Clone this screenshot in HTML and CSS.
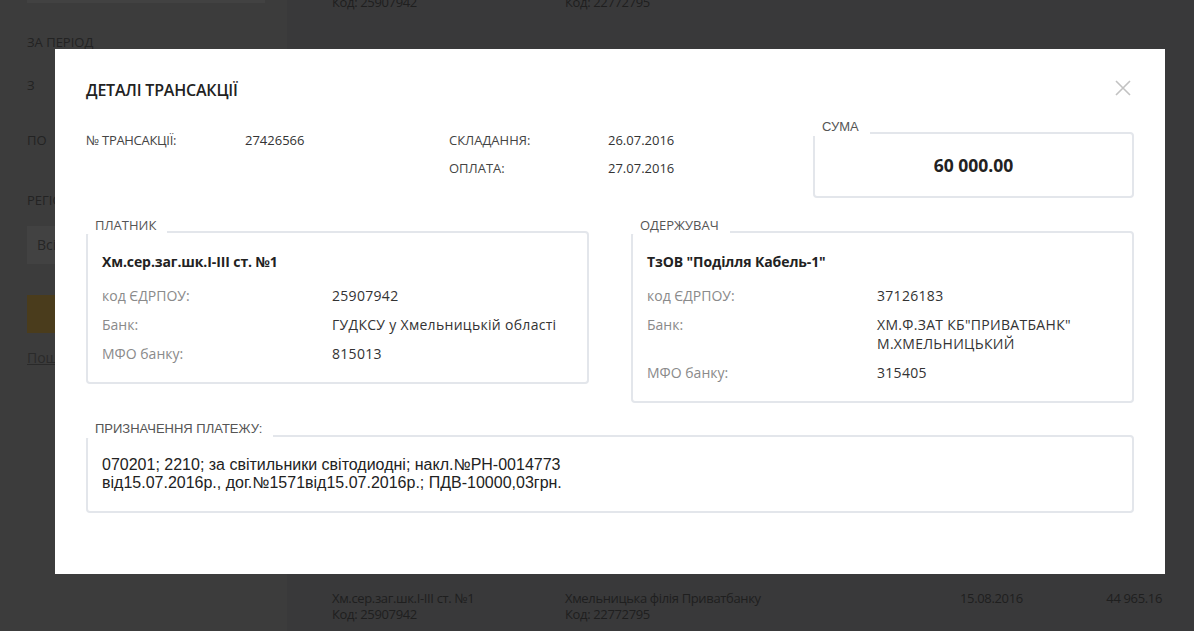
FILE: index.html
```html
<!DOCTYPE html>
<html lang="uk">
<head>
    <meta charset="UTF-8">
    <meta name="viewport" content="width=device-width, initial-scale=1.0">
    <title>Деталі трансакції</title>
    <link rel="stylesheet" href="styles.css">
</head>
<body>
    <div class="page">
        <aside class="sidebar">
            <div class="sb-input"></div>
            <div class="sb-label sb-period">ЗА ПЕРІОД</div>
            <div class="sb-label sb-from">З</div>
            <div class="sb-label sb-to">ПО</div>
            <div class="sb-label sb-region">РЕГІОН</div>
            <div class="sb-select">Всі</div>
            <div class="sb-button"></div>
            <a class="sb-link" href="#">Пошук</a>
        </aside>

        <main class="main">
            <div class="rows">
                <div class="row">
                    <div>Хм.сер.заг.шк.І-ІІІ ст. №1<br>Код: 25907942</div>
                    <div>Хмельницька філія Приватбанку<br>Код: 22772795</div>
                    <div>18.08.2016</div>
                    <div class="amount">12 430.00</div>
                </div>
                <div class="row">
                    <div>Хм.сер.заг.шк.І-ІІІ ст. №1<br>Код: 25907942</div>
                    <div>Хмельницька філія Приватбанку<br>Код: 22772795</div>
                    <div>15.08.2016</div>
                    <div class="amount">44 965.16</div>
                </div>
            </div>
        </main>
    </div>

    <!-- modal -->
    <div class="overlay">
        <div class="modal">
            <svg class="close" width="16" height="16" viewBox="0 0 16 16">
                <path d="M1 1 L15 15 M15 1 L1 15" stroke="#c2c2c2" stroke-width="1.6" fill="none"/>
            </svg>

            <h2 class="modal-title">ДЕТАЛІ ТРАНСАКЦІЇ</h2>

            <div class="summary">
                <div class="info">
                    <span class="info-label narrow">№ ТРАНСАКЦІЇ:</span>
                    <span class="info-value">27426566</span>
                    <span class="info-label">СКЛАДАННЯ:</span>
                    <span class="info-value">26.07.2016</span>
                    <span></span>
                    <span></span>
                    <span class="info-label">ОПЛАТА:</span>
                    <span class="info-value">27.07.2016</span>
                </div>
                <div class="box sum-box">
                    <span class="box-label arial">СУМА</span>
                    <div class="sum-value">60 000.00</div>
                </div>
            </div>

            <div class="parties">
                <div class="box party">
                    <span class="box-label">ПЛАТНИК</span>
                    <div class="party-name">Хм.сер.заг.шк.І-ІІІ ст. №1</div>
                    <div class="party-rows">
                        <span class="p-label">код ЄДРПОУ:</span>
                        <span class="p-value">25907942</span>
                        <span class="p-label">Банк:</span>
                        <span class="p-value">ГУДКСУ у Хмельницькій області</span>
                        <span class="p-label">МФО банку:</span>
                        <span class="p-value">815013</span>
                    </div>
                </div>
                <div class="box party">
                    <span class="box-label">ОДЕРЖУВАЧ</span>
                    <div class="party-name">ТзОВ "Поділля Кабель-1"</div>
                    <div class="party-rows">
                        <span class="p-label">код ЄДРПОУ:</span>
                        <span class="p-value">37126183</span>
                        <span class="p-label">Банк:</span>
                        <span class="p-value">ХМ.Ф.ЗАТ КБ"ПРИВАТБАНК"<br>М.ХМЕЛЬНИЦЬКИЙ</span>
                        <span class="p-label">МФО банку:</span>
                        <span class="p-value">315405</span>
                    </div>
                </div>
            </div>

            <div class="box purpose">
                <span class="box-label arial">ПРИЗНАЧЕННЯ ПЛАТЕЖУ:</span>
                <div class="purpose-text">070201; 2210; за світильники світодиодні; накл.№РН-0014773<br>від15.07.2016р., дог.№1571від15.07.2016р.; ПДВ-10000,03грн.</div>
            </div>
        </div>
    </div>
</body>
</html>
```

FILE: styles.css
```css
html, body {
    margin: 0;
    height: 100%;
    overflow: hidden;
}
body {
    font-family: 'Open Sans', 'Noto Sans', sans-serif;
    font-size: 13px;
    color: #333;
}
.page {
    display: flex;
    height: 631px;
}

/* background page (dimmed by overlay) */
.sidebar {
    width: 287px;
    flex-shrink: 0;
    background: #787878;
    padding: 0 22px 0 27px;
    box-sizing: border-box;
    display: flex;
    flex-direction: column;
}
.sb-input {
    height: 3px;
    background: #848484;
}
.sb-label {
    line-height: 20px;
    color: #464646;
    font-size: 13px;
}
.sb-period { margin-top: 29px; }
.sb-from { margin-top: 23px; }
.sb-to { margin-top: 35px; }
.sb-region { margin-top: 40px; }
.sb-select {
    margin-top: 16px;
    height: 38px;
    line-height: 38px;
    padding-left: 10px;
    background: #858585;
    color: #4c4c4c;
    font-size: 14px;
}
.sb-button {
    margin-top: 31px;
    height: 38px;
    background: #947838;
}
.sb-link {
    margin-top: 15px;
    line-height: 20px;
    color: #555;
    font-size: 14px;
}
.main {
    flex: 1;
    background: #727274;
    padding: 0 32px 0 45px;
    overflow: hidden;
}
.rows {
    display: flex;
    flex-direction: column;
    gap: 544px;
    margin-top: -40px;
}
.row {
    display: grid;
    grid-template-columns: 233px 395px 120px 1fr;
    height: 68px;
    padding-top: 18px;
    box-sizing: border-box;
    font-size: 13px;
    line-height: 16px;
    letter-spacing: -0.35px;
    color: #3e3e3e;
}
.row .amount {
    text-align: right;
}

/* modal */
.overlay {
    position: fixed;
    inset: 0;
    background: rgba(0, 0, 0, 0.5);
}
.modal {
    position: absolute;
    left: 55px;
    top: 49px;
    width: 1110px;
    height: 525px;
    box-sizing: border-box;
    background: #fff;
    padding: 30px 31px 0 31px;
}
.close {
    position: absolute;
    top: 31px;
    right: 34px;
}
.modal-title {
    margin: 0;
    font-size: 16px;
    line-height: 22px;
    font-weight: 600;
    letter-spacing: -0.2px;
    color: #222;
}
.summary {
    display: flex;
    margin-top: 25px;
}
.info {
    flex: 1;
    display: grid;
    grid-template-columns: 159px 204px 159px 1fr;
    grid-auto-rows: 28px;
    align-items: center;
    align-content: start;
}
.info-label {
    color: #444;
}
.info-label.narrow {
    letter-spacing: -0.3px;
}
.info-value {
    color: #333;
}
.box {
    position: relative;
    border: 2px solid #e3e6eb;
    border-radius: 4px;
    box-sizing: border-box;
}
.box-label {
    position: absolute;
    top: -17px;
    left: -2px;
    padding: 0 11px 0 9px;
    background: #fff;
    line-height: 18px;
    font-size: 13px;
    color: #555;
}
.arial {
    font-family: 'Liberation Sans', Arial, sans-serif;
}
.sum-box {
    width: 321px;
    height: 66px;
    margin-top: 6px;
    display: flex;
    align-items: center;
    justify-content: center;
}
.sum-box .box-label {
    top: -16px;
}
.sum-value {
    font-size: 17.5px;
    font-weight: 700;
    color: #222;
}
.parties {
    display: flex;
    align-items: flex-start;
    gap: 42px;
    margin-top: 33px;
}
.party {
    flex: 1;
    padding: 19px 14px 19px 14px;
}
.party-name {
    font-size: 14px;
    font-weight: 700;
    letter-spacing: -0.1px;
    line-height: 20px;
    color: #222;
}
.party-rows {
    display: grid;
    grid-template-columns: 230px 1fr;
    row-gap: 10px;
    margin-top: 14px;
    font-size: 14px;
    line-height: 19px;
}
.p-label {
    color: #8a8a8a;
}
.p-value {
    color: #333;
    letter-spacing: 0.3px;
}
.purpose {
    margin-top: 32px;
    padding: 19px 14px;
}
.purpose-text {
    font-family: 'Liberation Sans', Arial, sans-serif;
    font-size: 16px;
    line-height: 18px;
    color: #222;
}
```
